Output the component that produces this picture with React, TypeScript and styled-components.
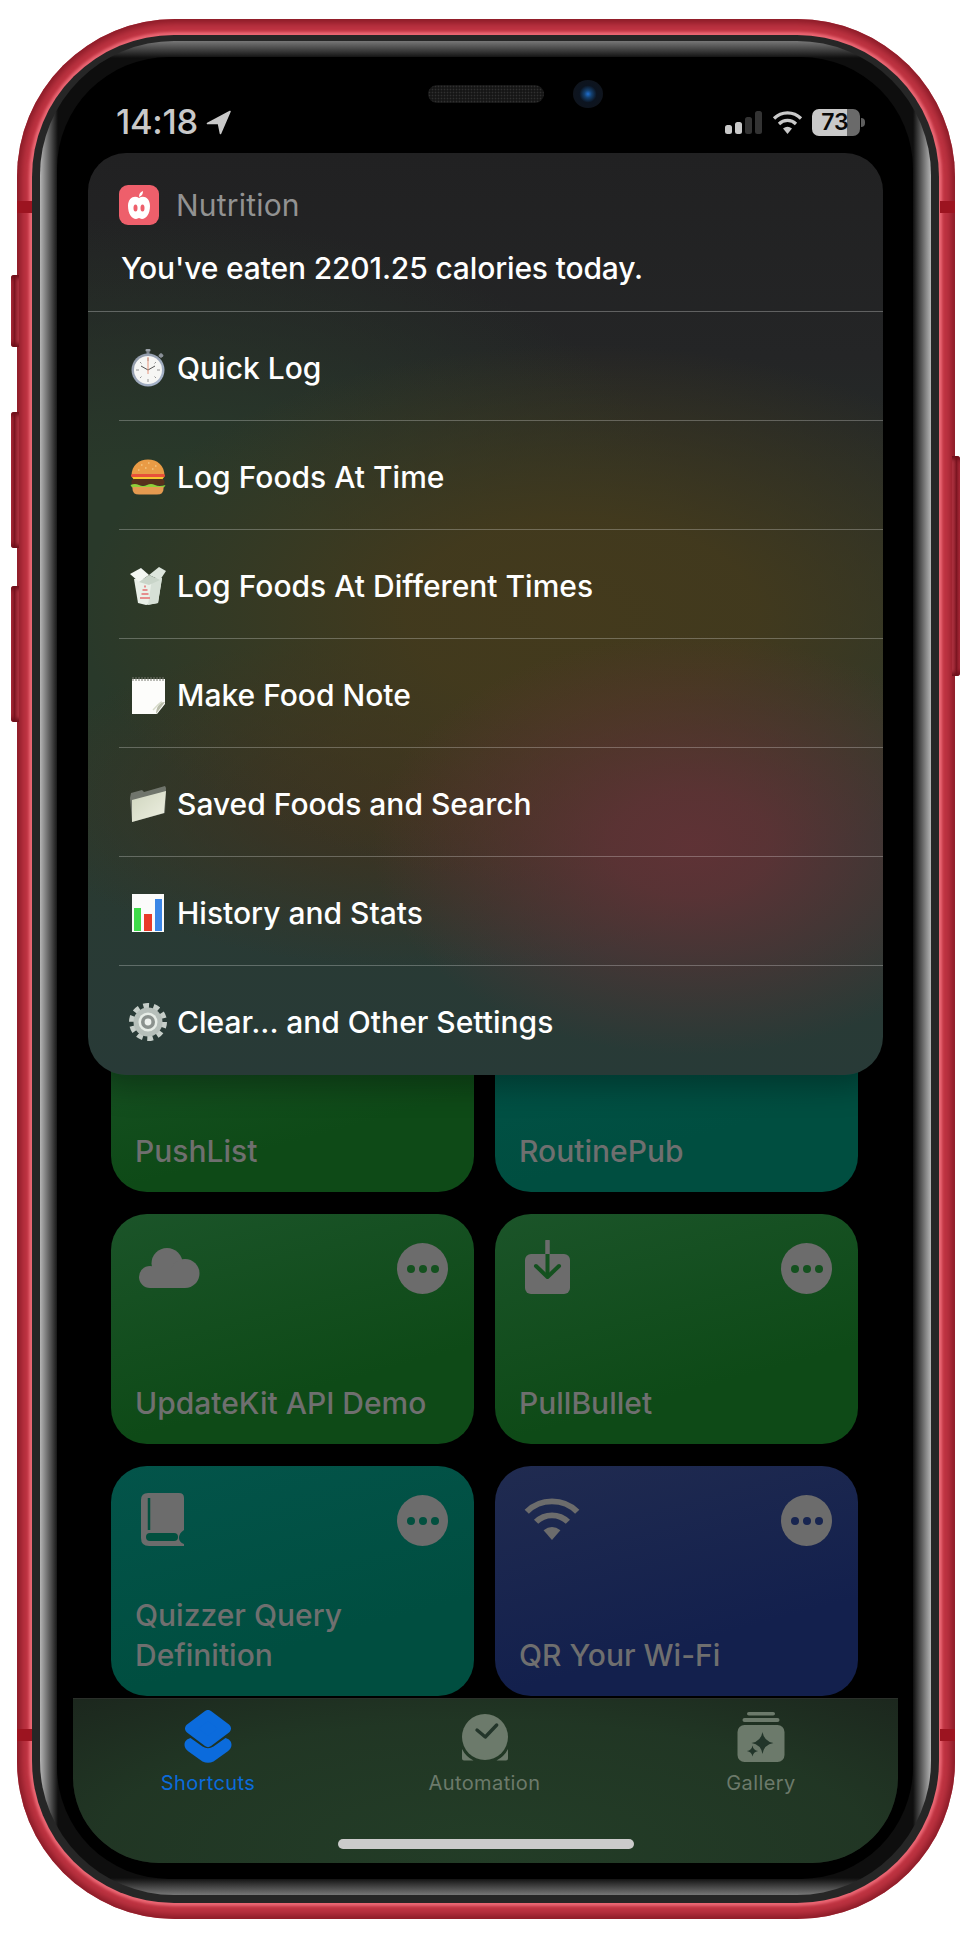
import React from "react";
import styled, { createGlobalStyle } from "styled-components";

const Global = createGlobalStyle`
  html, body { margin: 0; padding: 0; background: #fff; }
  * { box-sizing: border-box; }
  #root { width: 970px; height: 1944px; overflow: hidden; font-family: Inter, "Noto Sans", sans-serif; }
`;

const Page = styled.div`
  width: 970px;
  height: 1944px;
  padding: 19px 15px 25px 17px;
  background: #fff;
`;

const Device = styled.div`
  position: relative;
  width: 938px;
  height: 1900px;
  padding: 16px 16px 16px 15px;
  border-radius: 158px;
  background: #bf3442;
  box-shadow: inset 0 0 7px 4px #881a26;
`;

const SideKey = styled.div<{ $side: "left" | "right"; $top: number; $height: number }>`
  position: absolute;
  top: ${(p) => p.$top}px;
  height: ${(p) => p.$height}px;
  width: 8px;
  ${(p) => (p.$side === "left" ? "left: -6px; border-radius: 3px 0 0 3px;" : "right: -5px; border-radius: 0 3px 3px 0;")}
  background: linear-gradient(to ${(p) => (p.$side === "left" ? "right" : "left")}, #b8303f 0, #7a1420 45%, #c4404e 100%);
  box-shadow: inset 0 5px 4px -2px #6d0f1a, inset 0 -5px 4px -2px #6d0f1a;
`;

const Antenna = styled.div<{ $side: "left" | "right"; $top: number }>`
  position: absolute;
  top: ${(p) => p.$top}px;
  ${(p) => (p.$side === "left" ? "left: 0;" : "right: 0;")}
  width: 15px;
  height: 12px;
  background: #9c1420;
`;

const Band = styled.div`
  height: 100%;
  padding: 6px 8px 8px 8px;
  border-radius: 142px;
  background: #262626;
  box-shadow: 0 0 3px 3px #ec6875;
`;

const Bezel = styled.div`
  height: 100%;
  padding: 16px 18px 16px 17px;
  border-radius: 134px;
  background:
    linear-gradient(to right, #b4b4b4 0, rgba(0, 0, 0, 0) 18px),
    linear-gradient(to left, #b4b4b4 0, rgba(0, 0, 0, 0) 18px),
    linear-gradient(to bottom, #777 0, rgba(0, 0, 0, 0) 17px),
    linear-gradient(to top, #777 0, rgba(0, 0, 0, 0) 17px),
    #0e0e0e;
`;

const Screen = styled.div`
  position: relative;
  height: 100%;
  padding: 16px 15px 16px 16px;
  border-radius: 112px;
  background: #000;
`;

const Speaker = styled.div`
  position: absolute;
  left: 371px;
  top: 28px;
  width: 116px;
  height: 18px;
  border-radius: 9px;
  background: radial-gradient(circle, #303030 0.7px, #161616 1.1px) 0 0 / 3px 3px;
`;

const Camera = styled.div`
  position: absolute;
  left: 516px;
  top: 23px;
  width: 30px;
  height: 28px;
  border-radius: 50%;
  background: radial-gradient(circle, #1f6fd0 0, #14406f 18%, #0c1420 42%, #11141a 100%);
`;

const Display = styled.div`
  height: 100%;
  display: flex;
  flex-direction: column;
  border-radius: 90px 90px 86px 86px;
  overflow: hidden;
  background: #000;
`;

const StatusBar = styled.div`
  height: 80px;
  flex: none;
  display: flex;
  align-items: flex-start;
  justify-content: space-between;
  padding: 30px 33px 0 43px;
  color: #c9c9c9;
`;

const StatusGroup = styled.div<{ $gap: number; $drop?: number }>`
  display: flex;
  align-items: center;
  gap: ${(p) => p.$gap}px;
  margin-top: ${(p) => p.$drop ?? 0}px;
`;

const Time = styled.span`
  font-size: 34.5px;
  font-weight: 500;
  line-height: 38px;
  letter-spacing: -0.3px;
`;

const Battery = styled.div`
  position: relative;
  width: 48px;
  height: 27px;
  margin-right: 5px;
  border-radius: 7px;
  background: linear-gradient(to right, #c9c9c9 0, #c9c9c9 73%, #6a6a6a 73%, #6a6a6a 100%);
  display: flex;
  align-items: center;
  justify-content: center;
  color: #0a0a0a;
  font-size: 23px;
  font-weight: 600;
  line-height: 27px;
  padding-right: 2px;
  &::after {
    content: "";
    position: absolute;
    right: -5px;
    top: 9px;
    width: 4px;
    height: 9px;
    border-radius: 0 4px 4px 0;
    background: #5e5e5e;
  }
`;

const Content = styled.div`
  position: relative;
  flex: 1;
  min-height: 0;
  display: flex;
  flex-direction: column;
  justify-content: flex-end;
  padding: 0 40px 2px 38px;
`;

const CardGrid = styled.div`
  display: grid;
  grid-template-columns: 363px 363px;
  grid-auto-rows: 230px;
  column-gap: 21px;
  row-gap: 22px;
`;

const tones = {
  green: { bg: "linear-gradient(165deg, #1b5429 0%, #0e4a17 70%)", dot: "#14511f" },
  teal: { bg: "linear-gradient(165deg, #03544a 0%, #004e40 70%)", dot: "#02503f" },
  blue: { bg: "linear-gradient(165deg, #202b50 0%, #13204d 70%)", dot: "#182550" },
};
type Tone = keyof typeof tones;

const Card = styled.div<{ $tone: Tone }>`
  display: flex;
  flex-direction: column;
  justify-content: space-between;
  padding: 26px 26px 21px 24px;
  border-radius: 36px;
  background: ${(p) => tones[p.$tone].bg};
`;

const CardTop = styled.div`
  display: flex;
  justify-content: space-between;
  align-items: flex-start;
`;

const CardGlyph = styled.svg`
  display: block;
  width: 70px;
  height: 60px;
  margin-left: 1px;
`;

const More = styled.div`
  width: 51px;
  height: 51px;
  margin-top: 3px;
  border-radius: 50%;
  background: #6c6c6c;
  display: flex;
  align-items: center;
  justify-content: center;
  gap: 4px;
`;

const MoreDot = styled.span<{ $tone: Tone }>`
  width: 8px;
  height: 8px;
  border-radius: 50%;
  background: ${(p) => tones[p.$tone].dot};
`;

const CardTitle = styled.div`
  font-size: 30px;
  font-weight: 500;
  line-height: 40px;
  color: #6f6f6f;
`;

const Panel = styled.div`
  position: absolute;
  top: 0;
  left: 15px;
  right: 15px;
  padding-bottom: 1px;
  border-radius: 38px;
  overflow: hidden;
  color: #fff;
  box-shadow: 0 12px 30px rgba(0, 0, 0, 0.3);
  background:
    radial-gradient(ellipse 320px 210px at 76% 75%, rgba(96, 50, 54, 0.97) 0, rgba(96, 50, 54, 0.85) 25%, rgba(96, 50, 54, 0) 100%),
    radial-gradient(ellipse 500px 270px at 62% 50%, rgba(68, 58, 28, 0.98) 0, rgba(68, 58, 28, 0.9) 35%, rgba(68, 58, 28, 0) 100%),
    radial-gradient(ellipse 400px 170px at 42% 70%, rgba(62, 50, 32, 0.95) 0, rgba(62, 50, 32, 0.7) 40%, rgba(62, 50, 32, 0) 100%),
    radial-gradient(ellipse 560px 360px at 8% 46%, #29392a 0, #29392a 30%, rgba(41, 57, 42, 0) 100%),
    linear-gradient(to bottom, #212122 0, #242526 22%, #2a3a30 62%, #283a37 100%);
`;

const PanelHeader = styled.div`
  height: 159px;
  padding: 32px 31px 0;
  border-bottom: 1px solid rgba(255, 255, 255, 0.28);
`;

const AppLine = styled.div`
  display: flex;
  align-items: center;
  gap: 17px;
  height: 40px;
`;

const AppIcon = styled.svg`
  display: block;
  width: 40px;
  height: 40px;
`;

const AppName = styled.span`
  font-size: 30px;
  font-weight: 400;
  letter-spacing: 0.2px;
  color: #929292;
`;

const Message = styled.div`
  margin: 23px 0 0 2px;
  font-size: 30px;
  font-weight: 500;
  line-height: 40px;
  letter-spacing: -0.15px;
`;

const Row = styled.div`
  height: 109px;
  margin-left: 31px;
  padding: 3px 0 0 10px;
  display: flex;
  align-items: center;
  gap: 10px;
  border-top: 1px solid rgba(255, 255, 255, 0.26);
  &:nth-of-type(2) {
    height: 108px;
    border-top: 0;
  }
`;

const RowEmoji = styled.svg`
  flex: none;
  display: block;
  width: 38px;
  height: 38px;
`;

const RowLabel = styled.span`
  font-size: 30px;
  font-weight: 500;
  line-height: 40px;
`;

const TabBar = styled.div`
  flex: none;
  height: 165px;
  display: flex;
  flex-direction: column;
  border-top: 1px solid #2a2f2a;
  background:
    radial-gradient(ellipse 700px 230px at 50% 90%, #233d27 0, rgba(35, 61, 39, 0.75) 55%, rgba(35, 61, 39, 0) 100%),
    #1a211b;
`;

const TabRow = styled.div`
  display: flex;
  justify-content: space-between;
  padding: 11px 67px 0 65px;
`;

const Tab = styled.div<{ $active?: boolean }>`
  width: 140px;
  display: flex;
  flex-direction: column;
  align-items: center;
  gap: 8px;
  color: ${(p) => (p.$active ? "#0b6bdc" : "#6c7a6b")};
`;

const TabGlyph = styled.svg`
  display: block;
  width: 48px;
  height: 53px;
`;

const TabLabel = styled.span`
  font-size: 20px;
  font-weight: 400;
  line-height: 24px;
  letter-spacing: 0.4px;
`;

const HomeIndicator = styled.div`
  align-self: center;
  margin-top: auto;
  margin-bottom: 14px;
  width: 296px;
  height: 10px;
  border-radius: 5px;
  background: #cbcbcb;
`;

const LocationArrow = () => (
  <svg width="26" height="25" viewBox="0 0 26 25">
    <path d="M24 1.5 L1.5 13.5 L12.5 13.5 L14.5 23.5 Z" fill="#c9c9c9" stroke="#c9c9c9" strokeWidth="1.6" strokeLinejoin="round" />
  </svg>
);

const Signal = () => (
  <svg width="38" height="23" viewBox="0 0 38 23">
    <rect x="0" y="14" width="7" height="9" rx="2.5" fill="#c9c9c9" />
    <rect x="10" y="11" width="7" height="12" rx="2.5" fill="#c9c9c9" />
    <rect x="20" y="6" width="7" height="17" rx="2.5" fill="#333" />
    <rect x="30" y="0" width="7" height="23" rx="2.5" fill="#333" />
  </svg>
);

const wifiPaths = (c: string) => (
  <>
    <path d="M2 7.5 A19 19 0 0 1 29 7.5" fill="none" stroke={c} strokeWidth="3.2" />
    <path d="M7 13 A12 12 0 0 1 24 13" fill="none" stroke={c} strokeWidth="3.2" />
    <path d="M15.5 23 L11 17.6 Q15.5 14 20 17.6 Z" fill={c} />
  </>
);

const emojis: Record<string, React.ReactNode> = {
  watch: (
    <>
      <defs>
        <linearGradient id="wr" x1="0" y1="0" x2="1" y2="1">
          <stop offset="0" stopColor="#8d96a3" />
          <stop offset="1" stopColor="#aab8d0" />
        </linearGradient>
      </defs>
      <rect x="16.5" y="0" width="5" height="2.5" rx="1" fill="#9aa0a8" />
      <rect x="17.5" y="2" width="3" height="4" fill="#7d838b" />
      <rect x="30" y="4.5" width="4" height="4" rx="1" fill="#8a9098" transform="rotate(45 32 6.5)" />
      <circle cx="19" cy="21" r="16.5" fill="url(#wr)" />
      <circle cx="19" cy="21" r="14" fill="#f6f6f4" />
      <path d="M19 9v3M19 30v3M7 21h3M28 21h3M11 13l1.5 1.5M27 13l-1.5 1.5M11 29l1.5-1.5M27 29l-1.5-1.5" stroke="#888" strokeWidth="0.9" />
      <path d="M19 21 L12 17 M19 21 L26 17" stroke="#555" strokeWidth="1" />
      <path d="M19 25 V8" stroke="#e58a70" strokeWidth="0.9" />
    </>
  ),
  burger: (
    <>
      <path d="M2.5 18 C2.5 7 10 1.5 19 1.5 S35.5 7 35.5 18 Z" fill="#e99b45" />
      <path d="M12 7h1.5M19 5h1.5M26 8h1.5M16 10h1.5M23 11h1.5M9 12h1.5" stroke="#f7d9a0" strokeWidth="1.1" />
      <rect x="2" y="16" width="34" height="3.5" rx="1.7" fill="#e8503a" />
      <path d="M3 19 H35 L33 22 H24 L20 24.5 L16 22 H5 Z" fill="#f6c52f" />
      <rect x="2.5" y="21" width="33" height="6.5" rx="3.2" fill="#57301c" />
      <path d="M1.5 27 Q6 25 10 27 T18 27 T26 27 T36.5 27 L35 29.5 H3 Z" fill="#8fcf3a" />
      <path d="M3.5 29 H34.5 V31 Q34.5 36.5 28 36.5 H10 Q3.5 36.5 3.5 31 Z" fill="#e59a50" />
    </>
  ),
  box: (
    <>
      <path d="M5 12 L33 11 L29 36 L17 38 L9 36 Z" fill="#e9f0e8" />
      <path d="M23 12 L33 11 L29 36 L19 38 Z" fill="#d6e0d6" />
      <path d="M1 7 L12 1 L20 8 L10 15 Z" fill="#f3f7f2" />
      <path d="M20 8 L30 0 L37 4 L31 13 Z" fill="#dde6dd" />
      <path d="M10 15 L20 8 L31 13 L20 18 Z" fill="#c9d5c9" />
      <path d="M15 19.5 h2 M13.5 23 h5 M12.5 27 h7 M11 31 h10" stroke="#e58e8e" strokeWidth="2.2" />
    </>
  ),
  note: (
    <>
      <path d="M3 3 H36 V28 L28 38 H3 Z" fill="#fdfdfb" />
      <path d="M4 1v4M7 1v4M10 1v4M13 1v4M16 1v4M19 1v4M22 1v4M25 1v4M28 1v4M31 1v4M34 1v4" stroke="#77786f" strokeWidth="1" />
      <path d="M36 26 L27 38 C27 32 30 26 36 26 Z" fill="#b9bdaa" />
      <path d="M24 34 C28 30 30 27 33 26" stroke="#d8dccb" strokeWidth="1.5" fill="none" />
    </>
  ),
  folder: (
    <>
      <defs>
        <linearGradient id="ff" x1="0" y1="0" x2="1" y2="1">
          <stop offset="0" stopColor="#cfd5be" />
          <stop offset="1" stopColor="#eef0e2" />
        </linearGradient>
      </defs>
      <path d="M1 13 L2 8 L13 5 L15 7 L36 1 L37 3 L36 28 L3 37 Z" fill="#70756c" />
      <path d="M3 15 L37 6 L35 28 L3 37 Z" fill="url(#ff)" />
    </>
  ),
  chart: (
    <>
      <rect x="3" y="0" width="32" height="38" fill="#fbfbfb" />
      <rect x="5" y="14" width="7" height="23" fill="#3edb4a" />
      <rect x="15" y="20" width="8" height="17" fill="#e93a29" />
      <rect x="26" y="5" width="7" height="32" fill="#3b86e6" />
    </>
  ),
  gear: (
    <>
      <circle cx="19" cy="19" r="16" fill="none" stroke="#c6cec9" strokeWidth="6" strokeDasharray="5.6 4.45" />
      <circle cx="19" cy="19" r="14.5" fill="#b6bfba" />
      <circle cx="19" cy="19" r="9.5" fill="#e7ede7" />
      <circle cx="19" cy="19" r="7" fill="#8b928e" />
      <circle cx="19" cy="19" r="3.4" fill="#eef2ee" />
    </>
  ),
};

const Emoji = ({ kind }: { kind: string }) => <RowEmoji viewBox="0 0 38 38">{emojis[kind]}</RowEmoji>;

const items = [
  { kind: "watch", label: "Quick Log" },
  { kind: "burger", label: "Log Foods At Time" },
  { kind: "box", label: "Log Foods At Different Times" },
  { kind: "note", label: "Make Food Note" },
  { kind: "folder", label: "Saved Foods and Search" },
  { kind: "chart", label: "History and Stats" },
  { kind: "gear", label: "Clear... and Other Settings" },
];

const G = "#6c6c6c";

const CardIcon = ({ kind, dot }: { kind?: string; dot: string }) => {
  if (kind === "cloud")
    return (
      <CardGlyph viewBox="0 0 70 60">
        <circle cx="14" cy="37" r="11" fill={G} />
        <circle cx="31" cy="23.5" r="15.5" fill={G} />
        <circle cx="49" cy="33.5" r="14.5" fill={G} />
        <rect x="14" y="28" width="35" height="20" fill={G} />
      </CardGlyph>
    );
  if (kind === "tray")
    return (
      <CardGlyph viewBox="0 0 70 60">
        <rect x="5" y="14" width="45" height="40" rx="6" fill={G} />
        <path d="M27.5 1 V14" stroke={G} strokeWidth="4.5" strokeLinecap="round" />
        <path d="M27.5 14 V36" stroke={dot} strokeWidth="4" />
        <path d="M16 26 L27.5 37 L39 26" fill="none" stroke={dot} strokeWidth="4" strokeLinecap="round" strokeLinejoin="round" />
      </CardGlyph>
    );
  if (kind === "book")
    return (
      <CardGlyph viewBox="0 0 70 60">
        <path d="M12 1 H43 Q48 1 48 6 V38 Q43 41 43 46 Q43 50 48 52 V54 H13 Q5 54 5 46 V8 Q5 1 12 1 Z" fill={G} />
        <path d="M13 6 V38" stroke={dot} strokeWidth="2.5" />
        <rect x="10" y="41" width="32" height="8" rx="4" fill={dot} />
      </CardGlyph>
    );
  if (kind === "wifi")
    return (
      <CardGlyph viewBox="0 0 70 60">
        <g transform="translate(3 6) scale(1.87 1.83)">{wifiPaths(G)}</g>
      </CardGlyph>
    );
  return <CardGlyph viewBox="0 0 70 60" />;
};

const cards: { tone: Tone; title: React.ReactNode; icon?: string }[] = [
  { tone: "green", title: "PushList" },
  { tone: "teal", title: "RoutinePub" },
  { tone: "green", title: "UpdateKit API Demo", icon: "cloud" },
  { tone: "green", title: "PullBullet", icon: "tray" },
  { tone: "teal", title: <>Quizzer Query<br />Definition</>, icon: "book" },
  { tone: "blue", title: "QR Your Wi-Fi", icon: "wifi" },
];

const star = (x: number, y: number, r: number) => {
  const k = r * 0.14;
  return `M${x} ${y - r} Q${x + k} ${y - k} ${x + r} ${y} Q${x + k} ${y + k} ${x} ${y + r} Q${x - k} ${y + k} ${x - r} ${y} Q${x - k} ${y - k} ${x} ${y - r} Z`;
};

export default function App() {
  return (
    <Page>
      <Global />
      <Device>
        <SideKey $side="left" $top={256} $height={72} />
        <SideKey $side="left" $top={393} $height={136} />
        <SideKey $side="left" $top={567} $height={136} />
        <SideKey $side="right" $top={437} $height={220} />
        <Antenna $side="left" $top={182} />
        <Antenna $side="right" $top={182} />
        <Antenna $side="left" $top={1710} />
        <Antenna $side="right" $top={1710} />
        <Band>
          <Bezel>
            <Screen>
              <Speaker />
              <Camera />
              <Display>
                <StatusBar>
                  <StatusGroup $gap={8}>
                    <Time>14:18</Time>
                    <LocationArrow />
                  </StatusGroup>
                  <StatusGroup $gap={9} $drop={6}>
                    <Signal />
                    <svg width="31" height="23" viewBox="0 0 31 23">{wifiPaths("#c9c9c9")}</svg>
                    <Battery>73</Battery>
                  </StatusGroup>
                </StatusBar>
                <Content>
                  <CardGrid>
                    {cards.map((c, i) => (
                      <Card key={i} $tone={c.tone}>
                        <CardTop>
                          <CardIcon kind={c.icon} dot={tones[c.tone].dot} />
                          <More>
                            <MoreDot $tone={c.tone} />
                            <MoreDot $tone={c.tone} />
                            <MoreDot $tone={c.tone} />
                          </More>
                        </CardTop>
                        <CardTitle>{c.title}</CardTitle>
                      </Card>
                    ))}
                  </CardGrid>
                  <Panel>
                    <PanelHeader>
                      <AppLine>
                        <AppIcon viewBox="0 0 40 40">
                          <rect width="40" height="40" rx="9" fill="#ee5f6b" />
                          <path d="M20 13 C16 10 9 12 9 21 C9 29 13 34 17 34 C18.5 34 19 33 20 33 C21 33 21.5 34 23 34 C27 34 31 29 31 21 C31 12 24 10 20 13 Z" fill="#fff" />
                          <path d="M20 12 C20 9 21 7 24 6 C24 9 23 11 20 12 Z" fill="#fff" />
                          <ellipse cx="16.5" cy="23" rx="2" ry="3.6" fill="#ee5f6b" />
                          <ellipse cx="23.5" cy="23" rx="2" ry="3.6" fill="#ee5f6b" />
                        </AppIcon>
                        <AppName>Nutrition</AppName>
                      </AppLine>
                      <Message>You've eaten 2201.25 calories today.</Message>
                    </PanelHeader>
                    {items.map((it) => (
                      <Row key={it.kind}>
                        <Emoji kind={it.kind} />
                        <RowLabel>{it.label}</RowLabel>
                      </Row>
                    ))}
                  </Panel>
                </Content>
                <TabBar>
                  <TabRow>
                    <Tab $active>
                      <TabGlyph viewBox="0 0 48 53">
                        <polygon points="24,5 42,18.5 24,32 6,18.5" fill="#0b6bdc" stroke="#0b6bdc" strokeWidth="10" strokeLinejoin="round" />
                        <path d="M6.5 28 C3 29 0.5 31 0.5 35 C0.5 38 2.5 40 4.5 41.5 L18.5 51.5 Q24 54 29.5 51.5 L43.5 41.5 C45.5 40 47.5 38 47.5 35 C47.5 31 45 29 41.5 28 L29.5 36.5 Q24 40 18.5 36.5 Z" fill="#0b6bdc" />
                      </TabGlyph>
                      <TabLabel>Shortcuts</TabLabel>
                    </Tab>
                    <Tab>
                      <TabGlyph viewBox="0 0 48 53">
                        <circle cx="24" cy="27" r="23" fill="#6c7a6b" />
                        <path d="M1 39 A25.5 25.5 0 0 0 12.5 50.5 L3 50.5 Q1 50.5 1 48.5 Z" fill="#6c7a6b" />
                        <path d="M47 39 A25.5 25.5 0 0 1 35.5 50.5 L45 50.5 Q47 50.5 47 48.5 Z" fill="#6c7a6b" />
                        <path d="M16 20 L24.3 27 L35.7 15" fill="none" stroke="#23352a" strokeWidth="3.4" strokeLinecap="round" strokeLinejoin="round" />
                      </TabGlyph>
                      <TabLabel>Automation</TabLabel>
                    </Tab>
                    <Tab>
                      <TabGlyph viewBox="0 0 48 53">
                        <rect x="10" y="2" width="28" height="3.6" rx="1.8" fill="#6c7a6b" />
                        <rect x="5.5" y="8" width="37" height="4" rx="2" fill="#6c7a6b" />
                        <rect x="0.5" y="15" width="47" height="37" rx="7" fill="#6c7a6b" />
                        <path d={star(25.5, 33, 11)} fill="#22352a" />
                        <path d={star(15.5, 41, 5.6)} fill="#22352a" />
                      </TabGlyph>
                      <TabLabel>Gallery</TabLabel>
                    </Tab>
                  </TabRow>
                  <HomeIndicator />
                </TabBar>
              </Display>
            </Screen>
          </Bezel>
        </Band>
      </Device>
    </Page>
  );
}
